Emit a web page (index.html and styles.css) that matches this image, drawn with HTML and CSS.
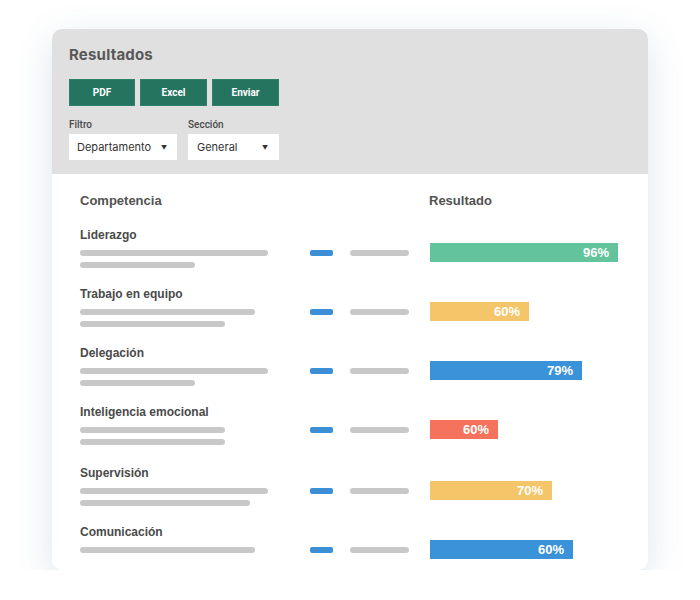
FILE: index.html
```html
<!DOCTYPE html>
<html lang="es">
<head>
<meta charset="utf-8">
<link rel="stylesheet" href="styles.css">
</head>
<body>
<div class="card">
  <div class="head">
    <div class="title">Resultados</div>
    <div class="buttons">
      <div class="btn">PDF</div>
      <div class="btn">Excel</div>
      <div class="btn">Enviar</div>
    </div>
    <div class="filters">
      <div class="filter">
        <div class="flabel">Filtro</div>
        <div class="select w1"><span>Departamento</span><span class="arrow">▼</span></div>
      </div>
      <div class="filter">
        <div class="flabel">Sección</div>
        <div class="select w2"><span>General</span><span class="arrow">▼</span></div>
      </div>
    </div>
  </div>
  <div class="body">
    <div class="colhead">
      <div>Competencia</div>
      <div class="c4">Resultado</div>
    </div>

    <div class="row">
      <div class="name">Liderazgo</div>
      <div class="lines"><div class="gl" style="width:188px"></div><div class="gl" style="width:115px"></div></div>
      <div class="mark"></div>
      <div class="gray"></div>
      <div class="bar teal" style="width:188px">96%</div>
    </div>

    <div class="row">
      <div class="name">Trabajo en equipo</div>
      <div class="lines"><div class="gl" style="width:175px"></div><div class="gl" style="width:145px"></div></div>
      <div class="mark"></div>
      <div class="gray"></div>
      <div class="bar yellow" style="width:99px">60%</div>
    </div>

    <div class="row">
      <div class="name">Delegación</div>
      <div class="lines"><div class="gl" style="width:188px"></div><div class="gl" style="width:115px"></div></div>
      <div class="mark"></div>
      <div class="gray"></div>
      <div class="bar blue" style="width:152px">79%</div>
    </div>

    <div class="row">
      <div class="name">Inteligencia emocional</div>
      <div class="lines"><div class="gl" style="width:145px"></div><div class="gl" style="width:145px"></div></div>
      <div class="mark"></div>
      <div class="gray"></div>
      <div class="bar red" style="width:68px">60%</div>
    </div>

    <div class="row extra">
      <div class="name">Supervisión</div>
      <div class="lines"><div class="gl" style="width:188px"></div><div class="gl" style="width:170px"></div></div>
      <div class="mark"></div>
      <div class="gray"></div>
      <div class="bar yellow" style="width:122px">70%</div>
    </div>

    <div class="row">
      <div class="name">Comunicación</div>
      <div class="lines"><div class="gl" style="width:175px"></div></div>
      <div class="mark"></div>
      <div class="gray"></div>
      <div class="bar blue" style="width:143px">60%</div>
    </div>
  </div>
</div>
</body>
</html>
```
FILE: styles.css
```css
html, body {
  margin: 0;
  padding: 0;
  background: #ffffff;
}
body {
  padding: 29px 0 0 52px;
  font-family: "Liberation Sans", Arial, sans-serif;
}
.card {
  width: 596px;
  height: 541px;
  border-radius: 10px;
  overflow: hidden;
  background: #ffffff;
  box-shadow: 0 10px 36px rgba(45, 105, 135, 0.17);
}
.head {
  background: #e0e0e0;
  height: 145px;
  box-sizing: border-box;
  padding: 17px 17px 0 17px;
}
.title {
  font-family: Inter, "Open Sans", sans-serif;
  font-weight: 700;
  font-size: 15px;
  line-height: 18px;
  color: #585858;
  letter-spacing: 0.2px;
}
.buttons {
  display: flex;
  gap: 5px;
  margin-top: 15px;
}
.btn {
  width: 66px;
  height: 27px;
  box-sizing: border-box;
  background: #24745f;
  border: 1px solid #2e8068;
  color: #ffffff;
  font-family: Roboto, sans-serif;
  font-weight: 700;
  font-size: 10px;
  display: flex;
  align-items: center;
  justify-content: center;
}
.btn + .btn {
  width: 67px;
}
.filters {
  display: flex;
  gap: 11px;
  margin-top: 13px;
}
.flabel {
  font-family: Roboto, sans-serif;
  font-weight: 500;
  font-size: 10px;
  line-height: 12px;
  color: #4a4a4a;
}
.select {
  margin-top: 3px;
  height: 26px;
  box-sizing: border-box;
  background: #ffffff;
  display: flex;
  align-items: center;
  justify-content: space-between;
  padding: 0 10px 0 8px;
  font-family: Inter, "Open Sans", sans-serif;
  font-size: 11px;
  color: #333333;
}
.w1 { width: 108px; }
.w2 { width: 91px; padding-left: 9px; padding-right: 11px; }
.arrow {
  font-size: 6px;
  color: #333333;
}
.body {
  padding: 19px 0 0 28px;
}
.colhead {
  display: grid;
  grid-template-columns: 349px 1fr;
  font-weight: 700;
  font-size: 13px;
  line-height: 16px;
  color: #525252;
  margin-bottom: 19px;
}
.row {
  display: grid;
  grid-template-columns: 230px 40px 80px 1fr;
  grid-template-rows: 15px auto;
  height: 59px;
}
.row.extra {
  margin-top: 2px;
}
.name {
  grid-column: 1 / 4;
  grid-row: 1;
  font-weight: 700;
  font-size: 12px;
  line-height: 15px;
  color: #4a4a4a;
  white-space: nowrap;
}
.lines {
  grid-column: 1;
  grid-row: 2;
  display: flex;
  flex-direction: column;
  gap: 6px;
  padding-top: 7px;
}
.gl {
  height: 6px;
  border-radius: 3px;
  background: #c8c8c8;
}
.mark {
  grid-column: 2;
  grid-row: 2;
  margin-top: 7px;
  width: 23px;
  height: 6px;
  border-radius: 2px;
  background: #3a8fd6;
}
.gray {
  grid-column: 3;
  grid-row: 2;
  margin-top: 7px;
  width: 59px;
  height: 6px;
  border-radius: 3px;
  background: #c8c8c8;
}
.bar {
  grid-column: 4;
  grid-row: 1 / 3;
  align-self: start;
  margin-top: 15px;
  height: 19px;
  box-sizing: border-box;
  padding-right: 9px;
  text-align: right;
  color: #ffffff;
  font-weight: 700;
  font-size: 13px;
  line-height: 19px;
}
.teal { background: #62c39d; }
.yellow { background: #f5c56a; }
.blue { background: #3a92d8; }
.red { background: #f5735c; }
```
